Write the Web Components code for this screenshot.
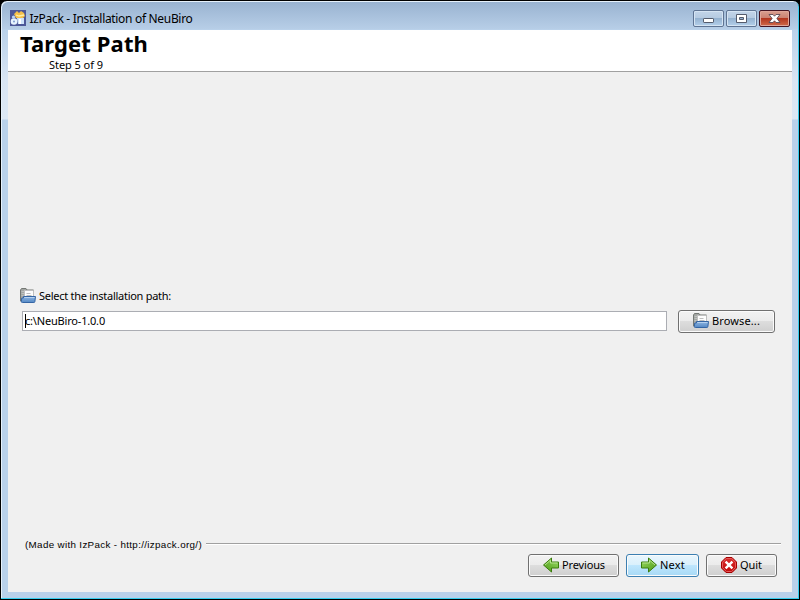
<!DOCTYPE html>
<html lang="en"><head><meta charset="utf-8"><title>IzPack</title>
<style>html,body{margin:0;width:800px;height:600px;overflow:hidden;background:#000}</style></head><body>
<installer-window></installer-window>
<script>
class BaseElement extends HTMLElement{
  constructor(){super();this.attachShadow({mode:'open'}).innerHTML=this.view();}
}
/* Text run whose tracking is set so that it fills the given width */
customElements.define('fit-text',class extends BaseElement{
  view(){return `<style>:host{display:block;white-space:nowrap}span{display:inline-block}</style><span><slot></slot></span>`}
  connectedCallback(){
    const s=this.shadowRoot.querySelector('span'),w=+this.getAttribute('w');
    const n=this.textContent.length;
    s.style.letterSpacing=((w-s.getBoundingClientRect().width)/n)+'px';
    this.style.width=w+'px';
  }
});
const icons={
app:`<rect width="16" height="16" fill="#4c5798"/><path d="M4 4l3-3 2 2 2-2 3 2 1 3-3 3-6-1z" fill="#f5c04a"/><path d="M6 5l3 1 5-1" stroke="#fff0a8" stroke-width="1.3" fill="none"/><circle cx="4" cy="11.5" r="3.3" fill="#e8f4ff"/><circle cx="4" cy="11.5" r="1" fill="#7f9ed0"/><path d="M7 8h7v6H8z" fill="#cfe3fa"/><circle cx="3.5" cy="7" r="1.6" fill="#b9d4f5"/><path d="M10 9v5" stroke="#fff" stroke-width="2"/>`,
folder:`<path d="M.5 13V2l1-1.500h4.500l1 1.500h6.500V13z" fill="#a3a6a3" stroke="#747874"/><path d="M1.500 3.500h3M1.500 5.500h3M1.500 7.500h2" stroke="#bfc2bf"/><path d="M4.500 2.500h9v8h-9z" fill="#fdfdfd" stroke="#c0c0c0"/><path d="M6.500 5.500h4M6.500 7.500h5" stroke="#bdbdbd"/><path d="M3.500 8.500h12l-.6 5q-.1 1-1 1H2.500q-1.300 0-1.200-1l.5-3.500h1.700z" fill="url(#f)" stroke="#3465a4"/><path d="M4.300 9.500h10.200" stroke="#b4d0ee"/><defs><linearGradient id="f" x2="0" y2="1"><stop stop-color="#8fb6e2"/><stop offset="1" stop-color="#5488c4"/></linearGradient></defs>`,
next:`<path d="M.5 5h7V1l8 7-8 7v-4h-7z" fill="url(#g)" stroke="#3b7d0c" stroke-linejoin="round"/><path d="M1.500 6h7V3.200L14 8" fill="none" stroke="#b5e28e"/><defs><linearGradient id="g" x2="1" y2="1"><stop stop-color="#9ad965"/><stop offset="1" stop-color="#4b9b14"/></linearGradient></defs>`,
quit:`<path d="M5 .5h6L15.500 5v6L11 15.500H5L.5 11V5z" fill="url(#r)" stroke="#a40000" stroke-linejoin="round"/><path d="M5.400 1.500h5.200l3.900 3.900v5.200l-3.900 3.900H5.400l-3.900-3.900V5.400z" fill="none" stroke="#e45b5b"/><path d="M4.600 4.600l6.800 6.800M11.400 4.600l-6.800 6.800" stroke="#fff" stroke-width="2.400"/><defs><linearGradient id="r" x2="0" y2="1"><stop stop-color="#dc3030"/><stop offset="1" stop-color="#c00808"/></linearGradient></defs>`};
icons.previous=`<g transform="matrix(-1 0 0 1 16 0)">${icons.next}</g>`;
customElements.define('ui-icon',class extends HTMLElement{
  connectedCallback(){if(!this.shadowRoot)this.attachShadow({mode:'open'}).innerHTML=`<style>:host{display:block;width:16px;height:16px;flex:none}svg{display:block}</style><svg width="16" height="16" viewBox="0 0 16 16">${icons[this.getAttribute('name')]}</svg>`}
});
customElements.define('push-button',class extends BaseElement{
  view(){return `<style>:host{box-sizing:border-box;height:23px;display:flex;align-items:center;gap:3px;padding:0 0 1px 14px;border:1px solid #707070;border-radius:3px;background:linear-gradient(#f2f2f2 0,#ebebeb 48%,#dddddd 50%,#cfcfcf);box-shadow:inset 0 0 0 1px #fbfbfb;line-height:20px}
  :host([active]){border-color:#3c7fb1;background:linear-gradient(#eaf6fd 0,#d9f0fc 48%,#bee6fd 50%,#a7d9f5)}</style><slot></slot>`}
});
customElements.define('caption-button',class extends HTMLElement{
  connectedCallback(){
    const k=this.getAttribute('kind');
    const g={min:`<rect x="10.500" y="8.500" width="10" height="4" rx=".6" fill="#fff" stroke="#545b6c"/>`,
    max:`<path d="M10.500 4.500h10v8h-10zM13.500 7.500v2h4v-2z" fill="#fff" fill-rule="evenodd" stroke="#545b6c"/>`,
    close:`<path d="M10 4.500h4l1.500 1.700L17 4.500h4L17.900 8.500l3.100 4h-4l-1.500-1.700-1.500 1.700h-4l3.100-4z" fill="#fff" stroke="#5a4a55" stroke-width=".9"/>`}[k];
    this.attachShadow({mode:'open'}).innerHTML=`<style>:host{box-sizing:border-box;display:block;width:31px;height:17px;border:1px solid #5f7493;border-radius:2px;background:linear-gradient(#c3d5e9 0,#b5cae1 47%,#95b2d0 50%,#b4d0eb);box-shadow:inset 0 0 0 1px #d5e4f3}
    :host([kind=close]){border-color:#431422;background:linear-gradient(#d9a091 0,#cb8070 47%,#b3361f 50%,#cf6b4a);box-shadow:inset 0 0 0 1px #dfa599}
    svg{display:block;margin:-1px}</style><svg width="31" height="17">${g}</svg>`;
  }
});
customElements.define('title-bar',class extends BaseElement{
  view(){return `<style>:host{box-sizing:border-box;height:28px;flex:none;display:flex;padding:8px 2px 0 2px;font:12px "Noto Sans","Open Sans",sans-serif;line-height:18px;color:#000}
  ui-icon{margin-right:3.500px}.caps{display:flex;gap:2px;margin-left:auto}</style>
  <ui-icon name="app"></ui-icon><fit-text w="163">IzPack - Installation of NeuBiro</fit-text>
  <div class="caps"><caption-button kind="min"></caption-button><caption-button kind="max"></caption-button><caption-button kind="close"></caption-button></div>`}
});
customElements.define('page-heading',class extends BaseElement{
  view(){return `<style>:host{box-sizing:border-box;display:block;height:42px;flex:none;background:#fff;border-bottom:1px solid #a0a0a0;padding-left:12px}
  h1{margin:0;padding-bottom:2px;font:bold 22px/26px "Noto Sans",sans-serif}.s{margin:0 0 0 29px;line-height:13px}</style>
  <h1><fit-text w="128">Target Path</fit-text></h1><fit-text class="s" w="54">Step 5 of 9</fit-text>`}
});
customElements.define('path-panel',class extends BaseElement{
  view(){return `<style>:host{display:block;padding:216px 17px 0 12px}.label{display:flex;gap:3px;line-height:16px;height:16px}
  .row{display:flex;margin:6px 0 0 2px;gap:11px}.field{box-sizing:border-box;flex:1;height:20px;border:1px solid #abadb3;background:#fff;padding-left:2px;line-height:18px;margin-top:1px;display:flex}
  i{width:1px;height:14px;margin:2px -1px 0 0;background:#000}push-button{width:97px}</style>
  <div class="label"><ui-icon name="folder"></ui-icon><fit-text w="132">Select the installation path:</fit-text></div>
  <div class="row"><div class="field"><i></i><fit-text w="80">c:\\NeuBiro-1.0.0</fit-text></div>
  <push-button><ui-icon name="folder"></ui-icon><fit-text w="48">Browse...</fit-text></push-button></div>`}
});
customElements.define('nav-bar',class extends BaseElement{
  view(){return `<style>:host{display:block;padding:0 11px 0 17px}.made{display:flex;gap:4px;font:9.8px/13px "Liberation Sans",Arial,sans-serif;align-items:center}
  hr{flex:1;margin:0;border:0;border-top:1px solid #a0a0a0;border-bottom:1px solid #fff;position:relative;top:-1px}
  .b{display:flex;justify-content:flex-end;gap:7px;margin:3px 4px 0 0}</style>
  <div class="made"><fit-text w="177">(Made with IzPack - http://izpack.org/)</fit-text><hr></div>
  <div class="b"><push-button style="width:91px"><ui-icon name="previous"></ui-icon><fit-text w="43">Previous</fit-text></push-button>
  <push-button active style="width:73px"><ui-icon name="next"></ui-icon><fit-text w="25">Next</fit-text></push-button>
  <push-button style="width:71px"><ui-icon name="quit"></ui-icon><fit-text w="22">Quit</fit-text></push-button></div>`}
});
customElements.define('installer-window',class extends BaseElement{
  view(){return `<style>:host{box-sizing:border-box;display:flex;flex-direction:column;width:800px;height:600px;padding:1px 7px 7px;border:1px solid #000;border-radius:7px 7px 0 0;
  background:linear-gradient(#98b2d0 0,#b7cee7 28px,#b9d1ea 28px,#d9e5f3 80px,#dce8f5 118px,#b9d1ea 119px);
  box-shadow:inset -1px -1px #35cdee,inset 1px 1px #e6f1fb;font:11px "Noto Sans","Open Sans",sans-serif;color:#000}
  main{flex:1;min-height:0;background:#f0f0f0;display:flex;flex-direction:column}nav-bar{margin-top:auto;padding-bottom:15px}</style>
  <title-bar></title-bar><main><page-heading></page-heading><path-panel></path-panel><nav-bar></nav-bar></main>`}
});
</script></body></html>
